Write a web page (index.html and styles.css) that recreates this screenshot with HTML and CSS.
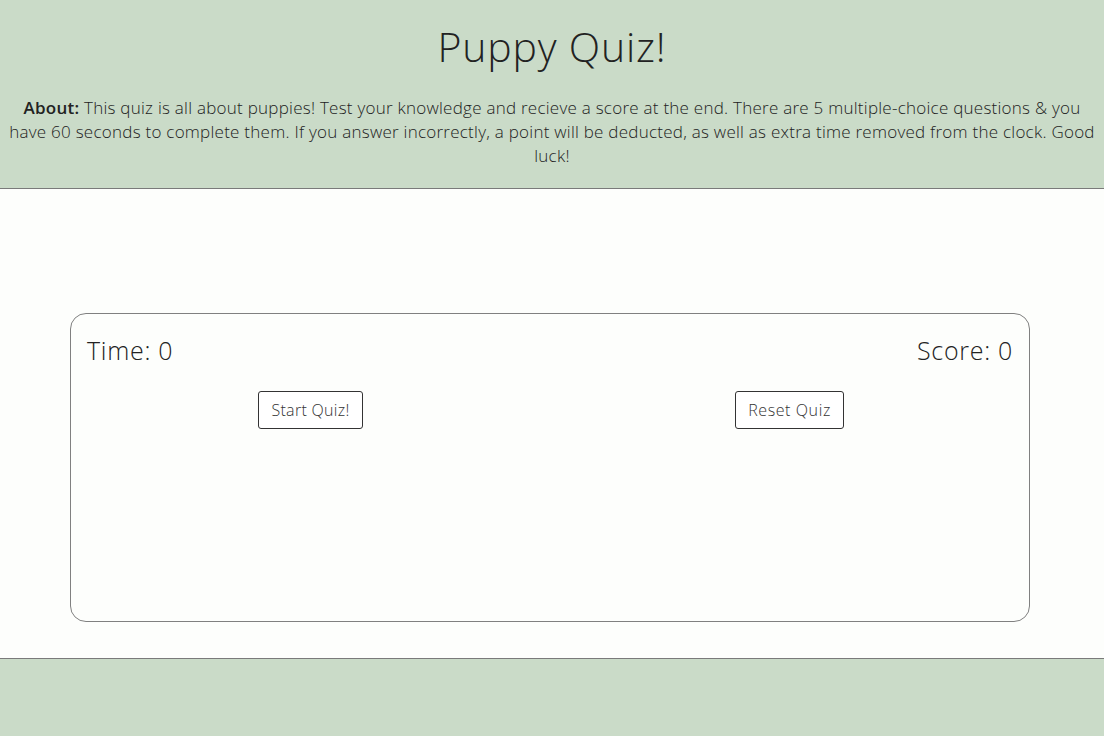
FILE: index.html
```html
<!DOCTYPE html>
<html>
<head>
<meta charset="utf-8">
<link rel="stylesheet" href="styles.css">
</head>
<body>
<header class="header">
  <h1 class="title">Puppy Quiz!</h1>
  <p class="about"><strong>About:</strong> This quiz is all about puppies! Test your knowledge and recieve a score at the end. There are 5 multiple-choice questions &amp; you have 60 seconds to complete them. If you answer incorrectly, a point will be deducted, as well as extra time removed from the clock. Good luck!</p>
</header>
<main class="main">
  <section class="card">
    <div class="stats">
      <div class="stat">Time: 0</div>
      <div class="stat">Score: 0</div>
    </div>
    <div class="actions">
      <div class="action"><button class="btn">Start Quiz!</button></div>
      <div class="action"><button class="btn btn-reset">Reset Quiz</button></div>
    </div>
  </section>
</main>
<footer class="footer"></footer>
</body>
</html>
```
FILE: styles.css
```css
html, body { margin: 0; padding: 0; }
body {
  font-family: "Open Sans", "Noto Sans", sans-serif;
  font-weight: 300;
  color: #222;
  background: #fdfefc;
}
.header {
  background: #cadbc8;
  border-bottom: 1px solid #7a7a7a;
  height: 188px;
  text-align: center;
  padding: 0 6px;
  box-sizing: content-box;
}
.title {
  margin: 0;
  padding-top: 20px;
  font-size: 41px;
  font-weight: 300;
  line-height: 52px;
  letter-spacing: 0.8px;
}
.about {
  margin: 24px 0 0;
  font-size: 17px;
  line-height: 24px;
  letter-spacing: 0.25px;
}
.about strong { font-weight: 600; }
.main {
  height: 469px;
  box-sizing: border-box;
  padding: 124px 74px 0 70px;
}
.card {
  height: 309px;
  box-sizing: border-box;
  border: 1px solid #808080;
  border-radius: 16px;
  padding: 20px 16px 0;
}
.stats {
  display: flex;
  justify-content: space-between;
  font-size: 25px;
  line-height: 32px;
  letter-spacing: 0.7px;
}
.actions {
  display: flex;
  margin: 25px -16px 0;
}
.action {
  flex: 1;
  display: flex;
  justify-content: center;
}
.btn {
  font-family: inherit;
  font-weight: 300;
  font-size: 16px;
  letter-spacing: 0.3px;
  color: #333;
  background: #fff;
  border: 1px solid #333;
  border-radius: 3px;
  height: 38px;
  padding: 0 12px;
}
.btn-reset { letter-spacing: 0.6px; }
.footer {
  background: #cadbc8;
  border-top: 1px solid #7a7a7a;
  height: 78px;
}
```
